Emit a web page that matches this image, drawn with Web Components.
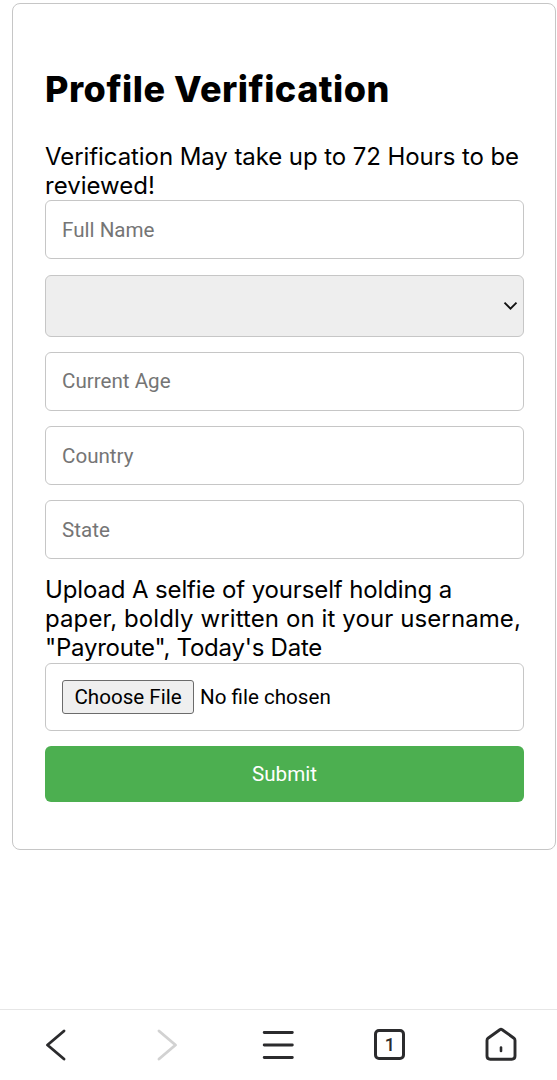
<!DOCTYPE html>
<html lang="en">
<head>
<meta charset="utf-8">
<title>Profile Verification</title>
<style>
  html, body { margin: 0; height: 100%; background: #fff; }
  body {
    display: flex;
    flex-direction: column;
    overflow: hidden;
    font-family: Roboto, "Liberation Sans", sans-serif;
    color: #000;
  }
</style>
</head>
<body>
<verification-card>
  <fit-line slot="title" data-width="345">Profile Verification</fit-line>
  <form-note>
    <fit-line data-width="474">Verification May take up to 72 Hours to be</fit-line>
    <fit-line data-width="110">reviewed!</fit-line>
  </form-note>
  <text-field data-placeholder="Full Name"></text-field>
  <select-field></select-field>
  <text-field data-placeholder="Current Age"></text-field>
  <text-field data-placeholder="Country"></text-field>
  <text-field data-placeholder="State"></text-field>
  <form-note>
    <fit-line data-width="407">Upload A selfie of yourself holding a</fit-line>
    <fit-line data-width="476">paper, boldly written on it your username,</fit-line>
    <fit-line data-width="277">"Payroute", Today's Date</fit-line>
  </form-note>
  <file-field></file-field>
  <submit-button>Submit</submit-button>
</verification-card>
<browser-bar data-tabs="1"></browser-bar>

<script>
// One line of text, tracked so that it fills data-width.
class FitLine extends HTMLElement {
  constructor() {
    super();
    this.attachShadow({ mode: 'open' });
    this.shadowRoot.innerHTML = `
      <style>
        :host { display: block; white-space: nowrap; }
        span { display: inline-block; }
      </style>
      <span><slot></slot></span>
    `;
  }

  connectedCallback() {
    this._fit();
  }

  _fit() {
    const span = this.shadowRoot.querySelector('span');
    const target = Number(this.getAttribute('data-width') || 0);
    const width = span.getBoundingClientRect().width;
    if (!target || !width) return;
    const gap = (target - width) / this.textContent.length;
    span.style.letterSpacing = `${gap.toFixed(3)}px`;
  }
}

class VerificationCard extends HTMLElement {
  constructor() {
    super();
    this.attachShadow({ mode: 'open' });
    this.shadowRoot.innerHTML = `
      <style>
        :host {
          display: flex;
          flex-direction: column;
          flex: none;
          box-sizing: border-box;
          width: 544px;
          height: 847px;
          margin: 3px 0 0 12px;
          padding: 56px 31px 0 32px;
          border: 1px solid #c6c6c6;
          border-radius: 8px;
        }

        h2 {
          margin: 0 0 23.5px;
          height: 58px;
          font: 800 36px/58px Inter, Roboto, sans-serif;
        }

        .fields {
          display: flex;
          flex-direction: column;
          gap: 15.6px;
        }
      </style>
      <h2><slot name="title"></slot></h2>
      <div class="fields"><slot></slot></div>
    `;
  }
}

class FormNote extends HTMLElement {
  constructor() {
    super();
    this.attachShadow({ mode: 'open' });
    this.shadowRoot.innerHTML = `
      <style>
        :host {
          display: block;
          margin-bottom: -15.6px;
          font: 400 24px/29.4px Inter, Roboto, sans-serif;
        }
      </style>
      <slot></slot>
    `;
  }
}

class TextField extends HTMLElement {
  constructor() {
    super();
    this.attachShadow({ mode: 'open' });
    this.shadowRoot.innerHTML = `
      <style>
        :host { display: block; height: 58.6px; }

        input {
          display: block;
          box-sizing: border-box;
          width: 100%;
          height: 100%;
          padding: 0 16px;
          border: 1px solid #c6c6c6;
          border-radius: 6px;
          background: #fff;
          font: 400 20.6px Roboto, sans-serif;
        }

        input::placeholder { color: #757575; }
      </style>
      <input type="text">
    `;
  }

  connectedCallback() {
    this.shadowRoot.querySelector('input').placeholder = this.getAttribute('data-placeholder') || '';
  }
}

class SelectField extends HTMLElement {
  constructor() {
    super();
    this.attachShadow({ mode: 'open' });
    this.shadowRoot.innerHTML = `
      <style>
        :host {
          display: flex;
          align-items: center;
          justify-content: flex-end;
          box-sizing: border-box;
          height: 62px;
          padding-right: 5px;
          border: 1px solid #c6c6c6;
          border-radius: 6px;
          background: #eee;
        }
      </style>
      <svg width="15" height="10" viewBox="0 0 15 10" fill="none" stroke="#111" stroke-width="1.9">
        <path d="M1.5 1.7 7.5 7.7 13.5 1.7"/>
      </svg>
    `;
  }
}

class FileField extends HTMLElement {
  constructor() {
    super();
    this.attachShadow({ mode: 'open' });
    this.shadowRoot.innerHTML = `
      <style>
        :host {
          display: flex;
          align-items: center;
          gap: 6px;
          box-sizing: border-box;
          height: 68px;
          padding: 0 16px;
          border: 1px solid #c6c6c6;
          border-radius: 6px;
          font-size: 20.6px;
        }

        button {
          box-sizing: border-box;
          width: 132px;
          height: 34px;
          padding: 0;
          border: 1px solid #6b6b6b;
          border-radius: 3px;
          background: #efefef;
          color: #000;
          font: inherit;
        }
      </style>
      <button type="button">Choose File</button>
      <span>No file chosen</span>
    `;
  }
}

class SubmitButton extends HTMLElement {
  constructor() {
    super();
    this.attachShadow({ mode: 'open' });
    this.shadowRoot.innerHTML = `
      <style>
        :host { display: block; height: 55.4px; }

        button {
          display: block;
          width: 100%;
          height: 100%;
          border: 0;
          border-radius: 6px;
          background: #4caf50;
          color: #fff;
          font: 400 20.6px Roboto, sans-serif;
        }
      </style>
      <button type="submit"><slot></slot></button>
    `;
  }
}

class BrowserBar extends HTMLElement {
  constructor() {
    super();
    this.attachShadow({ mode: 'open' });
    this.shadowRoot.innerHTML = `
      <style>
        :host {
          display: grid;
          grid-template-columns: repeat(5, 1fr);
          justify-items: center;
          align-items: center;
          box-sizing: border-box;
          height: 71px;
          margin-top: auto;
          padding-bottom: 1px;
          border-top: 1px solid #e6e6e6;
        }

        svg {
          display: block;
          fill: none;
          stroke: #2b2b2d;
          stroke-width: 2.9;
          stroke-linecap: round;
          stroke-linejoin: round;
        }

        .off { stroke: #d2d2d2; }

        .tabs {
          display: flex;
          align-items: center;
          justify-content: center;
          box-sizing: border-box;
          width: 31px;
          height: 31px;
          border: 3px solid #2b2b2d;
          border-radius: 5px;
          color: #2b2b2d;
          font: 500 18px/1 Roboto, sans-serif;
        }
      </style>
      <svg width="36" height="36" viewBox="0 0 36 36"><path d="M26 4 9.5 18 26 32"/></svg>
      <svg class="off" width="36" height="36" viewBox="0 0 36 36"><path d="M10 4 26.5 18 10 32"/></svg>
      <svg width="36" height="36" viewBox="0 0 36 36"><path d="M4.2 5.5H32.3M4.2 18H32.3M4.2 30.5H32.3"/></svg>
      <div class="tabs"></div>
      <svg width="36" height="36" viewBox="0 0 36 36">
        <path d="M16.8 2.7Q18 1.9 19.2 2.7L31 11.2Q32 12 32 13.5V29Q32 32.2 28.8 32.2H7.2Q4 32.2 4 29V13.5Q4 12 5 11.2Z"/>
        <path d="M18 20.5V24" stroke-width="2.6"/>
      </svg>
    `;
  }

  connectedCallback() {
    this.shadowRoot.querySelector('.tabs').textContent = this.getAttribute('data-tabs') || '';
  }
}

customElements.define('verification-card', VerificationCard);
customElements.define('form-note', FormNote);
customElements.define('text-field', TextField);
customElements.define('select-field', SelectField);
customElements.define('file-field', FileField);
customElements.define('submit-button', SubmitButton);
customElements.define('browser-bar', BrowserBar);
customElements.define('fit-line', FitLine);
</script>
</body>
</html>
